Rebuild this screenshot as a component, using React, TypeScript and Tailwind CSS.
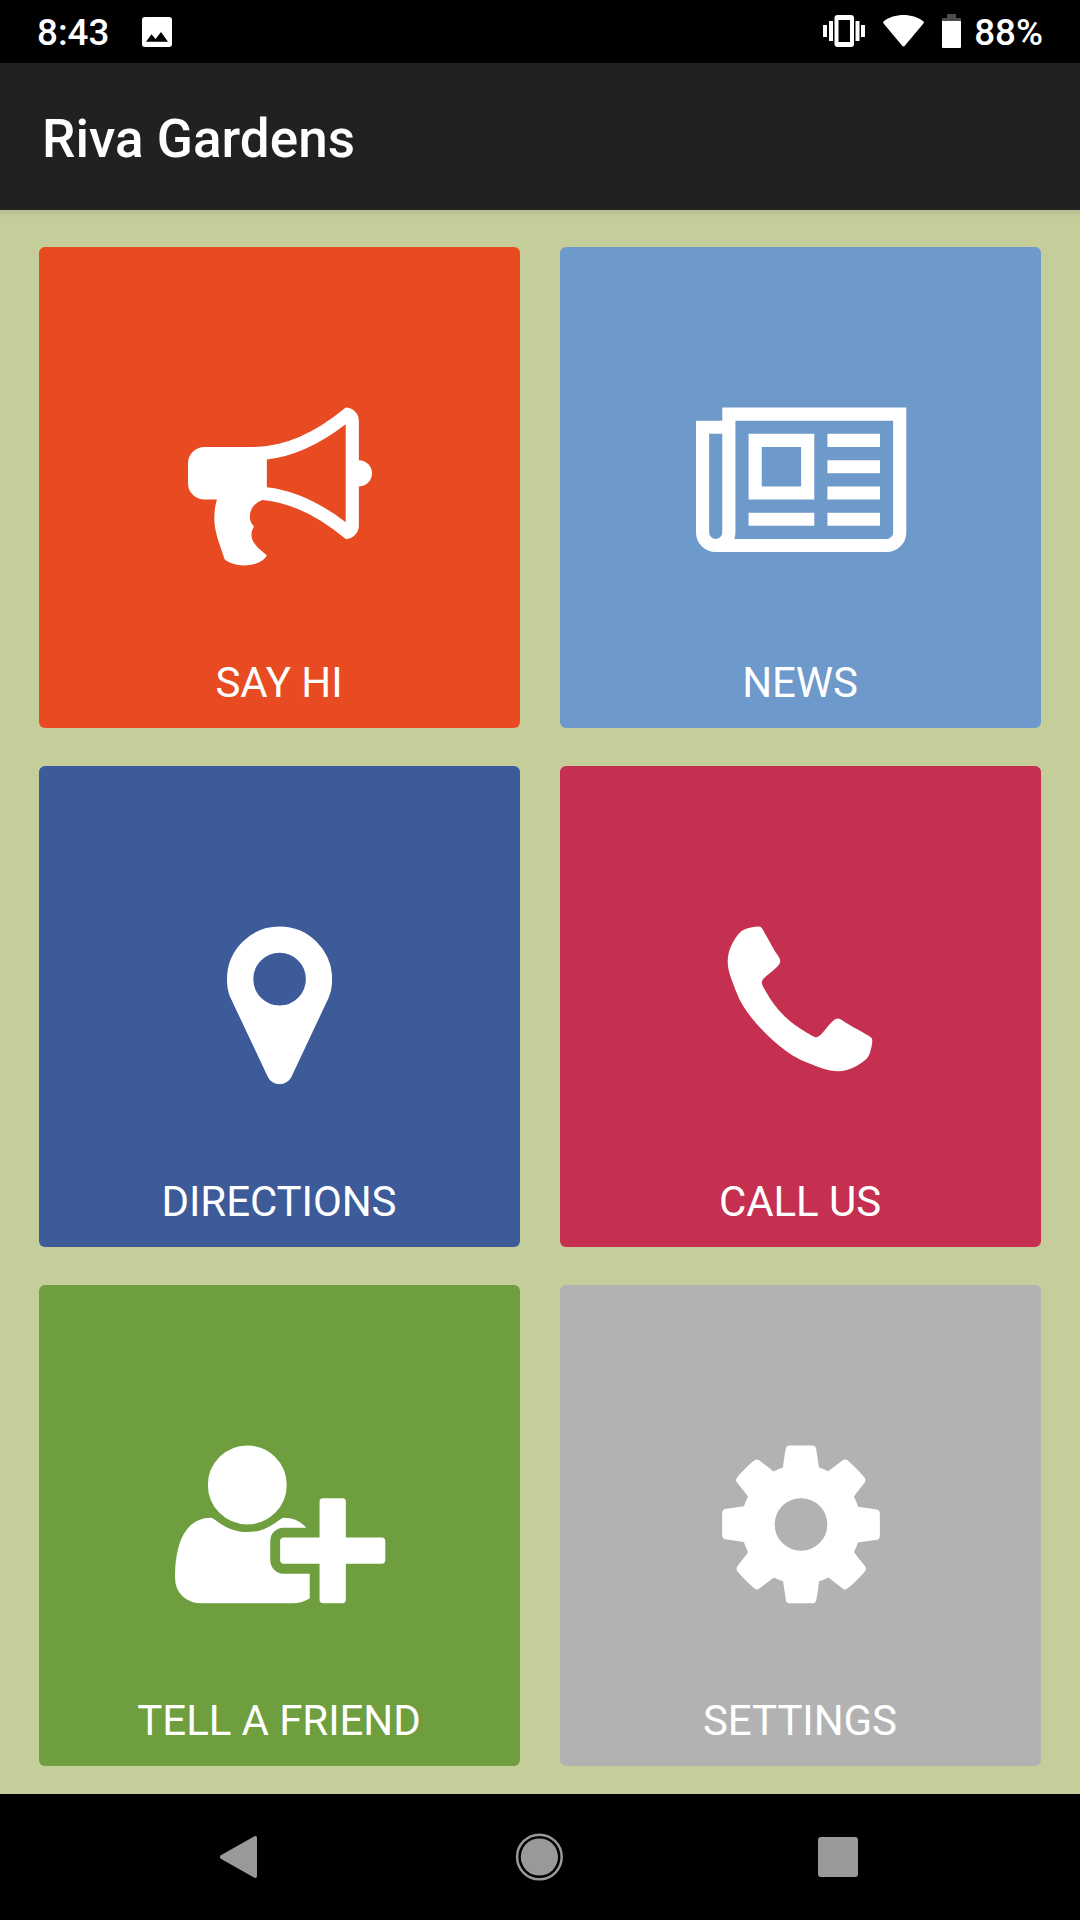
import clsx from "clsx";

type IconProps = {
  width: number;
  path: string;
  shift?: string;
};

type Tile = {
  label: string;
  color: string;
  icon: IconProps;
};

const bullhorn =
  "M1664 640q53 0 90.5 37.5t37.5 90.5-37.5 90.5-90.5 37.5v384q0 52-38 90t-90 38q-417-347-812-380-58 19-91 66t-31 100.5 40 92.5q-20 33-23 65.5t6 58 33.5 55 48 50 61.5 50.5q-29 58-111.5 83t-168.5 11.5-132-55.5q-7-23-29.5-87.5t-32-94.5-23-89-15-101 3.5-98.5 22-110.5h-122q-66 0-113-47t-47-113v-192q0-66 47-113t113-47h480q435 0 896-384 52 0 90 38t38 90v384zm-128 604v-954q-394 302-768 343v270q377 42 768 341z";
const newspaper =
  "M1024 512h-384v384h384v-384zm128 640v128h-640v-128h640zm0-768v640h-640v-640h640zm640 768v128h-512v-128h512zm0-256v128h-512v-128h512zm0-256v128h-512v-128h512zm0-256v128h-512v-128h512zm-1536 960v-960h-128v960q0 26 19 45t45 19 45-19 19-45zm1664 0v-1088h-1536v1088q0 33-11 64h1483q26 0 45-19t19-45zm128-1216v1216q0 80-56 136t-136 56h-1664q-80 0-136-56t-56-136v-1088h256v-128h1792z";
const marker =
  "M768 640q0-106-75-181t-181-75-181 75-75 181 75 181 181 75 181-75 75-181zm256 0q0 109-33 179l-364 774q-16 33-47.5 52t-67.5 19-67.5-19-46.5-52l-365-774q-33-70-33-179 0-212 150-362t362-150 362 150 150 362z";
const phone =
  "M1600 1240q0 27-10 70.5t-21 68.5q-21 50-122 106-94 51-186 51-27 0-53-3.5t-57.5-12.5-47-14.5-55.5-20.5-49-18q-98-35-175-83-127-79-264-216t-216-264q-48-77-83-175-3-9-18-49t-20.5-55.5-14.5-47-12.5-57.5-3.5-53q0-92 51-186 56-101 106-122 25-11 68.5-21t70.5-10q14 0 21 3 18 6 53 76 11 19 30 54t35 63.5 31 53.5q3 4 17.5 25t21.5 35.5 7 28.5q0 20-28.5 50t-62 55-62 53-28.5 46q0 9 5 22.5t8.5 20.5 14 24 11.5 19q76 137 174 235t235 174q2 1 19 11.5t24 14 20.5 8.5 22.5 5q18 0 46-28.5t53-62 55-62 50-28.5q14 0 28.5 7t35.5 21.5 25 17.5q25 15 53.5 31t63.5 35 54 30q70 35 76 53 3 7 3 21z";
const userPlus =
  "M704 896q-159 0-271.5-112.5t-112.5-271.5 112.5-271.5 271.5-112.5 271.5 112.5 112.5 271.5-112.5 271.5-271.5 112.5zm960 128h352q13 0 22.5 9.5t9.5 22.5v192q0 13-9.5 22.5t-22.5 9.5h-352v352q0 13-9.5 22.5t-22.5 9.5h-192q-13 0-22.5-9.5t-9.5-22.5v-352h-352q-13 0-22.5-9.5t-9.5-22.5v-192q0-13 9.5-22.5t22.5-9.5h352v-352q0-13 9.5-22.5t22.5-9.5h192q13 0 22.5 9.5t9.5 22.5v352zm-736 224q0 52 38 90t90 38h256v238q-68 50-171 50h-874q-121 0-194-69t-73-190q0-53 3.5-103.5t14-109 26.5-108.5 43-97.5 62-81 85.5-53.5 111.5-20q19 0 39 17 79 61 154.5 91.5t164.5 30.5 164.5-30.5 154.5-91.5q20-17 39-17 132 0 217 96h-223q-52 0-90 38t-38 90v192z";
const cog =
  "M1152 896q0-106-75-181t-181-75-181 75-75 181 75 181 181 75 181-75 75-181zm512-109v222q0 12-8 23t-20 13l-185 28q-19 54-39 91 35 50 107 138 10 12 10 25t-9 23q-27 37-99 108t-94 71q-12 0-26-9l-138-108q-44 23-91 38-16 136-29 186-7 28-36 28h-222q-14 0-24.5-8.5t-11.5-21.5l-28-184q-49-16-90-37l-141 107q-10 9-25 9-14 0-25-11-126-114-165-168-7-10-7-23 0-12 8-23 15-21 51-66.5t54-70.5q-27-50-41-99l-183-27q-13-2-21-12.5t-8-23.5v-222q0-12 8-23t19-13l186-28q14-46 39-92-40-57-107-138-10-12-10-24 0-10 9-23 26-36 98.5-107.5t94.5-71.5q13 0 26 10l138 107q44-23 91-38 16-136 29-186 7-28 36-28h222q14 0 24.5 8.5t11.5 21.5l28 184q49 16 90 37l142-107q9-9 24-9 13 0 25 10 129 119 165 170 7 8 7 22 0 12-8 23-15 21-51 66.5t-54 70.5q26 50 41 98l183 28q13 2 21 12.5t8 23.5z";

const tiles: Tile[] = [
  { label: "SAY HI", color: "bg-[#e84b22]", icon: { width: 1792, path: bullhorn } },
  { label: "NEWS", color: "bg-[#6d99cb]", icon: { width: 2048, path: newspaper, shift: "ml-[2px]" } },
  { label: "DIRECTIONS", color: "bg-[#3d5a99]", icon: { width: 1024, path: marker } },
  { label: "CALL US", color: "bg-[#c63050]", icon: { width: 1792, path: phone, shift: "mr-[2px]" } },
  { label: "TELL A FRIEND", color: "bg-[#6e9e3e]", icon: { width: 2048, path: userPlus, shift: "ml-[2px]" } },
  { label: "SETTINGS", color: "bg-[#b2b2b2]", icon: { width: 1792, path: cog } },
];

// the glyphs sit a fraction of a pixel below the box they are drawn in
const TileIcon = ({ width, path, shift }: IconProps) => (
  <svg className={clsx("h-[184px]", shift)} viewBox={`0 -4 ${width} 1792`} fill="currentColor">
    <path d={path} />
  </svg>
);

const StatusBar = () => (
  <div className="flex h-[63px] items-center justify-between bg-black pl-[37px] pr-[37px] text-[36.75px] font-medium leading-none">
    <div className="flex items-center">
      <span className="mt-[4px]">8:43</span>
      <svg className="ml-[33px] size-[30px]" viewBox="0 0 30 30">
        <path
          fill="currentColor"
          fillRule="evenodd"
          d="M3 0h24a3 3 0 0 1 3 3v24a3 3 0 0 1-3 3H3a3 3 0 0 1-3-3V3a3 3 0 0 1 3-3zM4 24.700h22L19 15l-5.500 7-4-4.700z"
        />
      </svg>
    </div>
    <div className="flex items-center">
      <svg className="mb-[2px] h-[32px] w-[42px]" viewBox="0 0 42 32" fill="currentColor">
        <path d="M0 10h4v12H0zM6 6h4v20H6zM32.500 6h4v20h-4zM38 10h4v12h-4z" />
        <path
          fillRule="evenodd"
          d="M14.500 0h13.500a3 3 0 0 1 3 3v26a3 3 0 0 1-3 3h-13.500a3 3 0 0 1-3-3V3a3 3 0 0 1 3-3zM15.500 5v22h11.500V5z"
        />
      </svg>
      <svg className="ml-[18px] mb-[2px] h-[32px] w-[41px]" viewBox="0 0 41 32" fill="currentColor">
        <path d="M.6 8.500Q-.4 7.300.8 6.300C11-2 30-2 40.200 6.300q1.200 1 .2 2.200L22 30.500q-1.500 1.800-3 0z" />
      </svg>
      <svg className="ml-[18px] mb-[1px] h-[34px] w-[19px]" viewBox="0 0 19 34">
        <path fill="#4d4d4d" d="M5 0h9v4h4q1 0 1 1v3H0V5q0-1 1-1h4z" />
        <path fill="currentColor" d="M0 7h19v26q0 1-1 1H1q-1 0-1-1z" />
      </svg>
      <span className="ml-[13px] mt-[4px]">88%</span>
    </div>
  </div>
);

const NavBar = () => (
  <div className="flex h-[126px] items-center bg-black pl-[220px] text-[#999999]">
    <svg className="h-[42px] w-[37px]" viewBox="0 0 37 42" fill="currentColor">
      <path d="M.8 19.300L33.500.7Q37-1 37 2v38q0 3-3.500 1.300L.8 22.700q-1.600-1.700 0-3.400z" />
    </svg>
    <svg className="ml-[258px] size-[48px]" viewBox="0 0 48 48">
      <circle cx="24.400" cy="24" r="22.300" fill="none" stroke="currentColor" strokeWidth="2.500" />
      <circle cx="24.400" cy="24" r="18.600" fill="currentColor" />
    </svg>
    <div className="ml-[255px] size-[40px] rounded-[3px] bg-[#999999]" />
  </div>
);

export default function App() {
  return (
    <div className="flex h-[1920px] w-[1080px] flex-col bg-[#c5ce9a] font-['Roboto',sans-serif] text-white">
      <StatusBar />
      <header className="flex h-[147px] items-center bg-[#212121] pl-[42px] text-[53px] font-medium leading-none">
        <h1 className="mt-[6px] tracking-[0.05px]">Riva Gardens</h1>
      </header>
      <main className="flex-1">
        <div className="h-[8px] bg-linear-to-b from-[#b8bd94] to-[#c5ce9a]" />
        <div className="grid grid-cols-[481px_481px] gap-x-[40px] gap-y-[38px] px-[39px] pt-[29px]">
          {tiles.map((tile) => (
            <button
              key={tile.label}
              className={clsx(
                "flex h-[481px] flex-col items-center rounded-[6px] pb-[21px] pt-[147px]",
                tile.color
              )}
            >
              <TileIcon {...tile.icon} />
              <span className="mr-[1px] mt-auto text-[42px] leading-[48px] tracking-[-0.08px]">
                {tile.label}
              </span>
            </button>
          ))}
        </div>
      </main>
      <NavBar />
    </div>
  );
}
